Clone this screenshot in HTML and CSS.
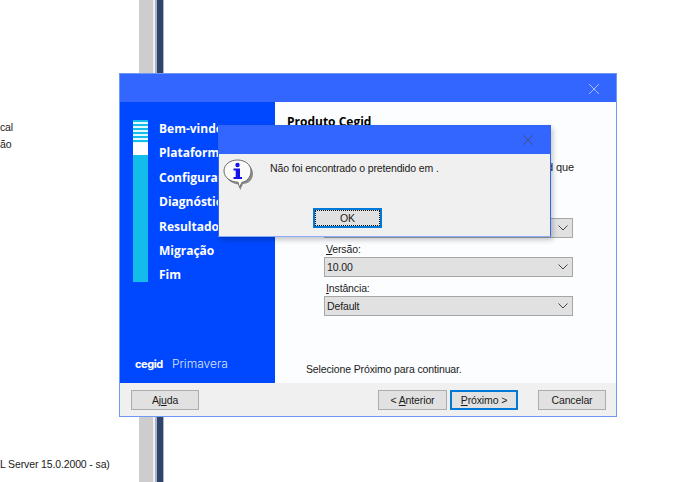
FILE: index.html
```html
<!DOCTYPE html>
<html lang="pt">
<head>
<meta charset="utf-8">
<title>Produto Cegid</title>
<link rel="stylesheet" href="styles.css">
</head>
<body>
<div class="desk-strip"></div>
<div class="desk-text desk-cal">cal</div>
<div class="desk-text desk-ao">ão</div>
<div class="desk-text desk-sql">L Server 15.0.2000 - sa)</div>

<section class="window">
  <header class="titlebar">
    <svg class="close close-main" viewBox="0 0 12 12"><path d="M1 1l10 10M11 1L1 11"/></svg>
  </header>
  <div class="body">
    <aside class="sidebar">
      <div class="steps">
        <div class="progress">
          <div class="p-stripes"></div>
          <div class="p-current"></div>
          <div class="p-rest"></div>
        </div>
        <ul class="step-list">
          <li>Bem-vindo</li>
          <li>Plataforma</li>
          <li>Configuração</li>
          <li>Diagnóstico</li>
          <li>Resultados</li>
          <li>Migração</li>
          <li>Fim</li>
        </ul>
      </div>
      <div class="logo"><span class="logo-a">cegid</span><span class="logo-b">Primavera</span></div>
    </aside>
    <main class="content">
      <h1>Produto Cegid</h1>
      <p class="intro">d que</p>
      <div class="form">
        <div class="combo"><span></span><svg class="chev" viewBox="0 0 10 6"><path d="M.5.5L5 5 9.500.5"/></svg></div>
        <label class="lab"><u>V</u>ersão:</label>
        <div class="combo"><span>10.00</span><svg class="chev" viewBox="0 0 10 6"><path d="M.5.5L5 5 9.500.5"/></svg></div>
        <label class="lab"><u>I</u>nstância:</label>
        <div class="combo"><span>Default</span><svg class="chev" viewBox="0 0 10 6"><path d="M.5.5L5 5 9.500.5"/></svg></div>
      </div>
      <p class="hint">Selecione Próximo para continuar.</p>
    </main>
  </div>
  <footer class="footer">
    <button class="btn">Aj<span class="ul">u</span>da</button>
    <div class="nav">
      <button class="btn btn-prev">&lt; <span class="ul">A</span>nterior</button>
      <button class="btn btn-focus"><span class="ul">P</span>róximo &gt;</button>
      <button class="btn btn-cancel">Cancelar</button>
    </div>
  </footer>
</section>

<section class="dialog">
  <header class="d-title">
    <svg class="close close-dlg" viewBox="0 0 12 12"><path d="M1 1l10 10M11 1L1 11"/></svg>
  </header>
  <div class="d-body">
    <div class="d-msg">
      <svg class="info" viewBox="0 0 34 34">
        <path class="i-shadow" d="M17 5c8 0 14 5 14 11.500S26 27 21 27l-3 6.500-.5-6C10 27 4 23 4 16.500S9 5 17 5z"/>
        <path class="i-bubble" d="M15.500 3c7.500 0 13.500 4.500 13.500 11S24 25 20 25.200l-2.500 5.300-1.500-5.300C8.500 25 2 20.500 2 14S8 3 15.500 3z"/>
        <circle class="i-mark" cx="15.500" cy="8" r="2.200"/>
        <path class="i-mark" d="M11.500 11.500h6.500v8.500h2v2h-8.500v-2h2.200v-6.500h-2.200z"/>
      </svg>
      <p>Não foi encontrado o pretendido em .</p>
    </div>
    <div class="d-actions"><button class="btn btn-ok"><span>OK</span></button></div>
  </div>
</section>
</body>
</html>
```
FILE: styles.css
```css
* { box-sizing: border-box; }
html, body { margin: 0; padding: 0; }
body {
  width: 693px;
  height: 482px;
  position: relative;
  overflow: hidden;
  background: #fff;
  font-family: "Liberation Sans", Arial, sans-serif;
  font-size: 10.500px;
  letter-spacing: -.13px;
  color: #1a1a1a;
}
.desk-strip {
  position: absolute;
  left: 139px;
  top: 0;
  width: 25px;
  height: 482px;
  background: linear-gradient(90deg, #cdcdcd 0 14px, #f1f1f1 14px 16px, #a9b4cc 16px 18px, #2f4468 18px 24px, #a9b4cc 24px);
}
.desk-text { position: absolute; left: 0; white-space: nowrap; line-height: 16px; }
.desk-cal { top: 119px; }
.desk-ao { top: 136px; }
.desk-sql { top: 456px; }

.window {
  position: absolute;
  left: 119px;
  top: 73px;
  width: 498px;
  height: 344px;
  border: 1px solid #6f97f5;
  display: flex;
  flex-direction: column;
  background: #fcfdff;
}
.titlebar {
  height: 28px;
  background: #3366ff;
  display: flex;
  align-items: center;
  justify-content: flex-end;
  padding-right: 16px;
}
.close { width: 12px; height: 12px; fill: none; stroke-width: 1; }
.close-main { stroke: #a9bffa; margin-top: 1px; }
.close-dlg { stroke: #44537f; }

.body { flex: 1; display: flex; min-height: 0; }
.sidebar {
  width: 155px;
  flex: none;
  background: #0048ff;
  padding: 18px 0 0 13px;
  display: flex;
  flex-direction: column;
  justify-content: space-between;
  color: #fff;
  letter-spacing: 0;
}
.steps { display: flex; gap: 11px; }
.progress { width: 15px; display: flex; flex-direction: column; }
.p-stripes {
  height: 23px;
  background: repeating-linear-gradient(180deg, #12bdec 0 2px, #e6f7fd 2px 4px);
}
.p-current { height: 12px; background: #fff; }
.p-rest { height: 127px; background: #12bdec; }
.step-list {
  list-style: none;
  margin: 0;
  padding: 0;
  font-family: "Open Sans", sans-serif;
  font-weight: 700;
  font-size: 12px;
  white-space: nowrap;
}
.step-list li { height: 24.400px; line-height: 18px; }
.logo { display: flex; gap: 9px; align-items: baseline; padding: 0 0 12px 2px; font-family: "Inter", sans-serif; }
.logo-a { font-weight: 700; font-size: 11px; letter-spacing: -.4px; }
.logo-b { font-size: 12px; font-weight: 300; color: #dbe5ff; }

.content { flex: 1; padding: 12px 43px 0 12px; position: relative; }
.content h1 { margin: 0; font-family: "Open Sans", sans-serif; font-size: 12px; line-height: 16px; font-weight: 700; color: #000; letter-spacing: 0; }
.intro { margin: 29px -1px 0 0; line-height: 16px; white-space: nowrap; text-align: right; font-size: 11px; }
.form { margin: 43px 0 0 37px; }
.combo {
  height: 20px;
  border: 1px solid #a6a6a6;
  background: #e1e1e1;
  display: flex;
  align-items: center;
  justify-content: space-between;
  padding: 0 4px 0 2px;
}
.chev { width: 10px; height: 6px; fill: none; stroke: #444; stroke-width: 1; }
.lab { display: block; height: 19px; padding: 3px 0 0 2px; line-height: 16px; }
.hint { margin: 0; position: absolute; left: 31px; top: 259px; line-height: 16px; white-space: nowrap; }

.footer {
  height: 33px;
  background: #f0f0f0;
  display: flex;
  align-items: flex-start;
  justify-content: space-between;
  padding: 7px 10px 0 11px;
}
.nav { display: flex; }
.btn {
  width: 68px;
  height: 20px;
  padding: 0;
  border: 1px solid #adadad;
  background: #e1e1e1;
  font: inherit;
  letter-spacing: inherit;
  line-height: 16px;
  color: #1a1a1a;
}
.ul { text-decoration: underline; }
.nav .btn-prev { width: 69px; }
.nav .btn-focus { margin-left: 3px; border: 2px solid #0078d7; }
.btn-cancel { margin-left: 20px; }

.dialog {
  position: absolute;
  left: 218px;
  top: 125px;
  width: 333px;
  height: 112px;
  border: 1px solid #2f66f0;
  border-bottom-color: #8bacf7;
  background: #f0f0f0;
  box-shadow: 2px 3px 5px rgba(0, 0, 0, .22);
  display: flex;
  flex-direction: column;
}
.d-title {
  height: 28px;
  flex: none;
  background: #3366ff;
  display: flex;
  align-items: center;
  justify-content: flex-end;
  padding-right: 16px;
}
.d-body { flex: 1; display: flex; flex-direction: column; }
.d-msg { display: flex; padding: 3px 0 0 3px; height: 54px; }
.info { width: 34px; height: 34px; flex: none; }
.i-shadow { fill: #8a8a8a; }
.i-bubble { fill: #fafafa; stroke: #6b6b6b; stroke-width: 1; }
.i-mark { fill: #1515e8; }
.d-msg p { margin: 3px 0 0 14px; line-height: 16px; }
.d-actions { display: flex; padding-left: 94px; }
.btn-ok {
  width: 69px;
  height: 20px;
  border: 2px solid #0078d7;
  padding: 0;
}
.btn-ok span {
  display: block;
  border: 1px dotted #111;
  height: 16px;
  line-height: 14px;
}
```
